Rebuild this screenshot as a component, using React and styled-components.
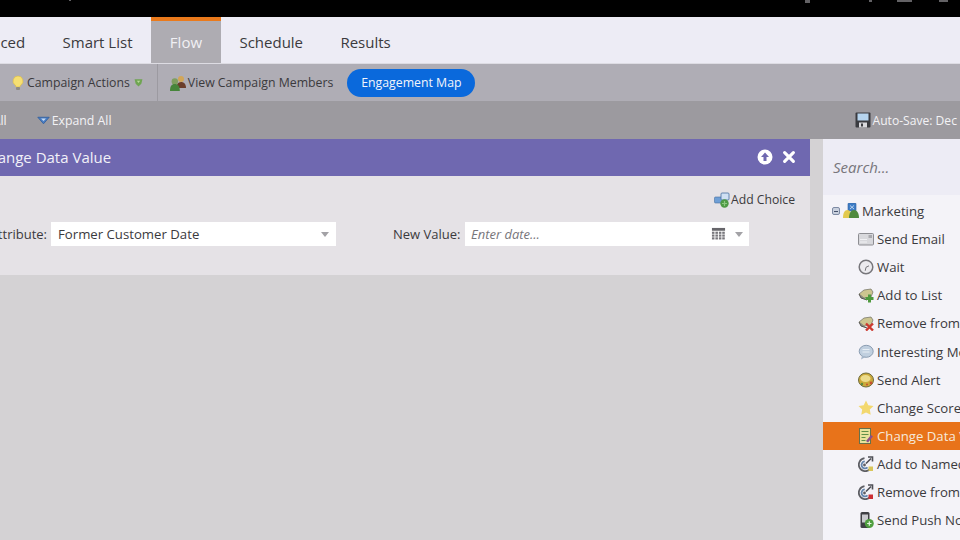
import React from 'react'
import styled, { createGlobalStyle } from 'styled-components'

const GlobalStyle = createGlobalStyle`
  html, body {
    margin: 0;
    padding: 0;
    background: #000;
  }
  * {
    box-sizing: border-box;
  }
`

const Page = styled.div`
  width: 960px;
  height: 540px;
  overflow: hidden;
  display: flex;
  flex-direction: column;
  font-family: "Open Sans", "Noto Sans", sans-serif;
  color: #3b3a3d;
`

const TopBar = styled.div`
  flex: 0 0 18px;
  background: #000;
  border-bottom: 1px solid #77767a;
  display: flex;
  align-items: flex-start;
  padding-left: 69px;
`

const TopMark = styled.span`
  display: block;
  height: ${p => p.$h || 2}px;
  width: ${p => p.$w || 2}px;
  margin-left: ${p => p.$gap || 0}px;
  background: #a5a4a8;
  opacity: .6;
`

const Tabs = styled.div`
  flex: 0 0 46px;
  margin-left: -62px;
  display: flex;
  background: #edecf5;
  border-bottom: 1px solid #dddce3;
  margin-top: -1px;
  width: 1022px;
`

const Tab = styled.div`
  padding: ${p => (p.$active ? '0' : '3px')} 18.7px 0;
  display: flex;
  align-items: center;
  font-size: 15px;
  height: 46px;
  color: ${p => (p.$active ? '#f1f0f4' : '#3b3a3d')};
  background: ${p => (p.$active ? '#aeacb2' : 'transparent')};
  border-top: ${p => (p.$active ? '4px solid #ea7a1c' : '0')};
`

const ActionBar = styled.div`
  flex: 0 0 37px;
  display: flex;
  align-items: center;
  background: #afadb5;
  font-size: 12.3px;
  padding-left: 10px;
`

const ActionItem = styled.div`
  display: flex;
  align-items: center;
  gap: ${p => p.$gap || 1}px;
  white-space: nowrap;
`

const ActionDivider = styled.div`
  width: 1px;
  height: 37px;
  background: #9c9aa1;
  margin: 0 12px 0 12px;
`

const PillButton = styled.div`
  margin-left: 14px;
  width: 128px;
  height: 28px;
  border-radius: 14px;
  background: #0a69dc;
  color: #f2f5fb;
  display: flex;
  align-items: center;
  justify-content: center;
  white-space: nowrap;
`

const ToolBar = styled.div`
  flex: 0 0 38px;
  display: flex;
  align-items: center;
  background: #9c9a9f;
  color: #f3f2f5;
  font-size: 12.3px;
  white-space: nowrap;
`

const ToolText = styled.span`
  margin-left: ${p => p.$gap || 0}px;
  font-size: ${p => p.$size || 12.3}px;
`

const ToolIcon = styled.span`
  display: flex;
  margin-left: ${p => p.$gap || 0}px;
  margin-right: 2px;
`

const Work = styled.div`
  flex: 1;
  display: flex;
  min-height: 0;
`

const Canvas = styled.div`
  flex: 0 0 823px;
  background: #d4d2d4;
`

const Panel = styled.div`
  width: 810px;
`

const PanelHead = styled.div`
  height: 37px;
  background: #6f68b0;
  color: #f2f1f8;
  font-size: 15px;
  display: flex;
  align-items: center;
  padding: 0 14px 2px 0;
  white-space: nowrap;
`

const PanelTitle = styled.div`
  flex: 1;
  margin-left: -21px;
`

const HeadIcons = styled.div`
  display: flex;
  align-items: center;
  gap: 9px;
`

const PanelBody = styled.div`
  height: 99px;
  background: #e5e2e6;
  font-size: 13px;
  padding-top: 15px;
`

const AddChoice = styled.div`
  display: flex;
  justify-content: flex-end;
  align-items: center;
  gap: 1px;
  height: 17px;
  margin-bottom: 1px;
  padding-right: 15px;
  font-size: 12.2px;
`

const FormRow = styled.div`
  display: flex;
  align-items: center;
  margin-top: 14px;
  margin-left: -11px;
  white-space: nowrap;
`

const FieldLabel = styled.div`
  width: ${p => p.$w}px;
  margin-left: ${p => p.$gap || 0}px;
  text-align: right;
`

const Field = styled.div`
  width: ${p => (p.$empty ? 284 : 285)}px;
  height: 24px;
  margin-left: ${p => (p.$empty ? 5 : 4)}px;
  background: #fff;
  display: flex;
  align-items: center;
  padding: 0 ${p => (p.$empty ? 6 : 7)}px 0 ${p => (p.$empty ? 6 : 7)}px;
  font-size: ${p => (p.$empty ? 13 : 13.2)}px;
  color: ${p => (p.$empty ? '#77767b' : '#3b3a3d')};
  font-style: ${p => (p.$empty ? 'italic' : 'normal')};
`

const FieldText = styled.div`
  flex: 1;
`

const Caret = styled.span`
  width: 0;
  height: 0;
  margin-left: ${p => p.$left || 0}px;
  border-left: 4px solid transparent;
  border-right: 4px solid transparent;
  border-top: 5px solid #a3a2a6;
`

const Palette = styled.div`
  flex: 1;
  min-width: 0;
  background: #f4f3f8;
  font-size: 13.2px;
  white-space: nowrap;
`

const Search = styled.div`
  height: 56px;
  background: #edecf5;
  color: #77767b;
  font-size: 15px;
  font-style: italic;
  display: flex;
  align-items: center;
  padding-left: 10px;
  margin-bottom: 2px;
`

const TreeRow = styled.div`
  height: 28.12px;
  display: flex;
  align-items: center;
  padding-left: ${p => (p.$root ? 9 : 35)}px;
  gap: 3px;
  background: ${p => (p.$selected ? '#e8731a' : 'transparent')};
  color: ${p => (p.$selected ? '#f6e9dc' : '#3b3a3d')};
`

const Expander = styled.span`
  width: 8px;
  height: 8px;
  border: 1px solid #7d8aa3;
  border-radius: 2px;
  background: #c9d0dd;
  display: flex;
  align-items: center;
  justify-content: center;
  &::after {
    content: '';
    width: 4px;
    height: 1px;
    background: #44506a;
  }
`

const Svg = ({ size = 16, children }) => (
  <svg width={size} height={size} viewBox="0 0 16 16" style={{ flex: 'none', display: 'block' }}>{children}</svg>
)

const Bulb = () => (
  <Svg>
    <path d="M8 1a5 5 0 0 0-3 9c.7.6 1 1.2 1 2h4c0-.8.3-1.4 1-2a5 5 0 0 0-3-9z" fill="#f6df72" stroke="#d9b945" strokeWidth=".6" />
    <rect x="6" y="12" width="4" height="3" rx="1" fill="#8f8c86" />
  </Svg>
)

const Shield = () => (
  <Svg size={9}>
    <path d="M1 2h14l-2 8-5 5-5-5z" fill="#6fa552" />
    <path d="M5 5h6l-3 4z" fill="#b8d99a" />
  </Svg>
)

const Members = () => (
  <Svg>
    <circle cx="11" cy="4" r="3" fill="#d2a658" />
    <path d="M6.500 13c0-4 1.500-6 4.500-6s5 2 5 6z" fill="#6b3d2a" />
    <circle cx="4.800" cy="6.500" r="3.200" fill="#7f9e5e" />
    <path d="M0 16c0-4.500 1.500-7 4.800-7s5 2.500 5 7z" fill="#46853a" />
  </Svg>
)

const ExpandIcon = () => (
  <Svg size={13}>
    <path d="M1 4h14l-7 8z" fill="#4c7fc4" stroke="#2f5c9c" strokeWidth="1" />
    <path d="M5 5.500h6l-3 3z" fill="#c7dcf4" />
  </Svg>
)

const Floppy = () => (
  <Svg>
    <rect x="0.500" y="0.500" width="15" height="15" rx="1" fill="#3a3b40" />
    <rect x="2.500" y="1.500" width="11" height="7" fill="#b6d4ee" />
    <rect x="4" y="10.500" width="8" height="5" fill="#d9d9dd" />
    <rect x="6" y="11.500" width="2" height="3" fill="#3a3b40" />
  </Svg>
)

const UpCircle = () => (
  <Svg>
    <circle cx="8" cy="8" r="7.500" fill="#fff" />
    <path d="M8 3.500l4 4.500H9.500v4h-3V8H4z" fill="#6f68b0" />
  </Svg>
)

const CloseX = () => (
  <Svg size={14}>
    <path d="M3 3l10 10M13 3L3 13" stroke="#fff" strokeWidth="3.600" strokeLinecap="round" />
  </Svg>
)

const ChoiceIcon = () => (
  <Svg>
    <rect x="0.500" y="5" width="8" height="6" rx="1" fill="#6f9fd6" stroke="#47709f" strokeWidth=".6" />
    <rect x="7" y="1" width="8" height="7" rx="1" fill="#cfe0f3" stroke="#47709f" strokeWidth=".8" />
    <circle cx="10.500" cy="11.500" r="4.200" fill="#4f9a45" />
    <path d="M10.500 9v5M8 11.500h5" stroke="#8cc77f" strokeWidth="1.200" />
  </Svg>
)

const Calendar = () => (
  <Svg size={15}>
    <rect x="1" y="1" width="14" height="3" fill="#66656a" />
    {[5, 8, 11].map(y => [1, 4.700, 8.400, 12].map(x => (
      <rect key={`${x}-${y}`} x={x} y={y} width="2.700" height="2.300" fill="#77767b" />
    )))}
  </Svg>
)

const MarketingIcon = () => (
  <Svg>
    <rect x="5" y="0" width="8" height="8" rx="1" fill="#3f7ec6" stroke="#2f5f9c" strokeWidth=".6" />
    <path d="M7 2.500l4 3.500M11 2.500l-4 3.500" stroke="#d5e6f7" strokeWidth=".8" />
    <path d="M0 15c0-5 1.500-8 4.500-8S8 10 8 15z" fill="#e2c94e" />
    <path d="M6 15c0-5 2-8 5-8s5 3 5 8z" fill="#4f8a3d" />
  </Svg>
)

const Mail = () => (
  <Svg>
    <rect x="0.500" y="2.500" width="15" height="11.500" rx="1" fill="#d8d8dc" stroke="#8d8d92" />
    <rect x="10.500" y="4" width="3.500" height="3" fill="#a9a9ae" />
    <path d="M2 8.500h7M2 11h7" stroke="#f1f1f4" />
  </Svg>
)

const Clock = () => (
  <Svg>
    <circle cx="8" cy="8" r="6.800" fill="#ecebef" stroke="#77767b" strokeWidth="1.500" />
    <path d="M8 8.300l3-1.500M8 8.300l-.8 3.500" stroke="#77767b" strokeWidth="1" />
  </Svg>
)

const ListBase = () => (
  <>
    <path d="M1 7l5-4 7-1 2 3-2 5-7 1z" fill="#ccc590" stroke="#6f6d62" strokeWidth=".7" />
    <path d="M1 7l2 4 6 2" fill="#8b8a80" stroke="#55544e" strokeWidth="1" />
  </>
)

const ListAdd = () => (
  <Svg>
    <ListBase />
    <path d="M11.500 7.500v8M7.500 11.500h8" stroke="#4f9a3e" strokeWidth="3" />
  </Svg>
)

const ListRemove = () => (
  <Svg>
    <ListBase />
    <path d="M8 8.500l7 7M15 8.500l-7 7" stroke="#cd3a30" strokeWidth="2.400" />
  </Svg>
)

const Bubble = () => (
  <Svg>
    <ellipse cx="8.200" cy="7.300" rx="7" ry="6" fill="#c0cfdf" stroke="#8b9db2" />
    <path d="M4 12l-1 3.500 4.500-2.500z" fill="#a5b6c9" />
    <path d="M4.500 5.500h7M4.500 8h7" stroke="#e7eef5" />
  </Svg>
)

const Alert = () => (
  <Svg>
    <ellipse cx="8" cy="8" rx="7.500" ry="7" fill="#cba93a" stroke="#6d6a3c" />
    <ellipse cx="7.500" cy="6.500" rx="5" ry="3.500" fill="#ecdc8c" />
    <circle cx="13" cy="11" r="1.400" fill="#c8502f" />
    <circle cx="4" cy="12" r="1.200" fill="#5c8b3e" />
    <circle cx="9" cy="12.500" r="1" fill="#c8502f" />
  </Svg>
)

const Star = () => (
  <Svg>
    <path d="M8 .5l2.300 4.800 5.200.7-3.700 3.600.9 5.200L8 12.400 3.300 14.800l.9-5.200L.5 6l5.200-.7z" fill="#f3d86e" />
  </Svg>
)

const DataSheet = () => (
  <Svg>
    <rect x="1.500" y="0.500" width="11" height="15" fill="#e8e29b" stroke="#66714a" />
    <path d="M3.500 3.500h7M3.500 6.500h7M3.500 9.500h4M3.500 12.500h4" stroke="#5f8f48" />
    <path d="M8 13l5-6 2 1.500-5 6z" fill="#8c4f8a" />
  </Svg>
)

const Target = ({ mark }) => (
  <Svg>
    <path d="M6.500 2.200a6.500 6.500 0 1 0 5.500 11" fill="none" stroke="#5d5e64" strokeWidth="1.800" />
    <path d="M6.800 5.400a3.500 3.500 0 1 0 2.700 6" fill="none" stroke="#6385ad" strokeWidth="1.800" />
    <circle cx="6.500" cy="9" r="1.400" fill="#5d5e64" />
    <path d="M8 7.500l5-5M10 1h4.500v4.500" fill="none" stroke="#4e4f55" strokeWidth="1.600" />
    <rect x="10.500" y="10.500" width="4.500" height="4.500" fill={mark} />
  </Svg>
)

const Phone = () => (
  <Svg>
    <rect x="2.500" y="0" width="9" height="16" rx="1.500" fill="#3f3f44" />
    <rect x="4" y="2.500" width="6" height="8" fill="#c9c9ce" />
    <circle cx="11.300" cy="11.500" r="4.500" fill="#4f9e3f" />
    <path d="M11.300 9.300v4.400M9.100 11.500h4.400" stroke="#e5f3df" strokeWidth="1.200" />
  </Svg>
)

const flowSteps = [
  { label: 'Send Email', icon: <Mail /> },
  { label: 'Wait', icon: <Clock /> },
  { label: 'Add to List', icon: <ListAdd /> },
  { label: 'Remove from List', icon: <ListRemove /> },
  { label: 'Interesting Moment', icon: <Bubble /> },
  { label: 'Send Alert', icon: <Alert /> },
  { label: 'Change Score', icon: <Star /> },
  { label: 'Change Data Value', icon: <DataSheet />, selected: true },
  { label: 'Add to Named Account', icon: <Target mark="#d9c65a" /> },
  { label: 'Remove from Named Account', icon: <Target mark="#cc2f35" /> },
  { label: 'Send Push Notification', icon: <Phone /> },
]

const App = () => (
  <Page>
    <GlobalStyle />
    <TopBar>
      <TopMark $h={1} $w={2} />
      <TopMark $h={3} $w={5} $gap={734} />
      <TopMark $h={2} $w={3} $gap={59} />
      <TopMark $h={2} $w={15} $gap={25} />
      <TopMark $h={2} $w={9} $gap={27} />
    </TopBar>
    <Tabs>
      <Tab>Advanced</Tab>
      <Tab>Smart List</Tab>
      <Tab $active>Flow</Tab>
      <Tab>Schedule</Tab>
      <Tab>Results</Tab>
    </Tabs>
    <ActionBar>
      <ActionItem><Bulb />Campaign Actions<ToolIcon $gap={3}><Shield /></ToolIcon></ActionItem>
      <ActionDivider />
      <ActionItem $gap={2}><Members />View Campaign Members</ActionItem>
      <PillButton>Engagement Map</PillButton>
    </ActionBar>
    <ToolBar>
      <ToolText $gap={-59}>Collapse All</ToolText>
      <ToolIcon $gap={30}><ExpandIcon /></ToolIcon>
      <ToolText>Expand All</ToolText>
      <ToolIcon $gap={743}><Floppy /></ToolIcon>
      <ToolText $size={12.1}>Auto-Save: Dec 12</ToolText>
    </ToolBar>
    <Work>
      <Canvas>
        <Panel>
          <PanelHead>
            <PanelTitle>Change Data Value</PanelTitle>
            <HeadIcons><UpCircle /><CloseX /></HeadIcons>
          </PanelHead>
          <PanelBody>
            <AddChoice><ChoiceIcon />Add Choice</AddChoice>
            <FormRow>
              <FieldLabel $w={58}>Attribute:</FieldLabel>
              <Field>
                <FieldText>Former Customer Date</FieldText>
                <Caret />
              </Field>
              <FieldLabel $w={67} $gap={57}>New Value:</FieldLabel>
              <Field $empty>
                <FieldText>Enter date...</FieldText>
                <Calendar />
                <Caret $left={9} />
              </Field>
            </FormRow>
          </PanelBody>
        </Panel>
      </Canvas>
      <Palette>
        <Search>Search...</Search>
        <TreeRow $root><Expander /><MarketingIcon />Marketing</TreeRow>
        {flowSteps.map(step => (
          <TreeRow key={step.label} $selected={step.selected}>{step.icon}{step.label}</TreeRow>
        ))}
      </Palette>
    </Work>
  </Page>
)

export default App
